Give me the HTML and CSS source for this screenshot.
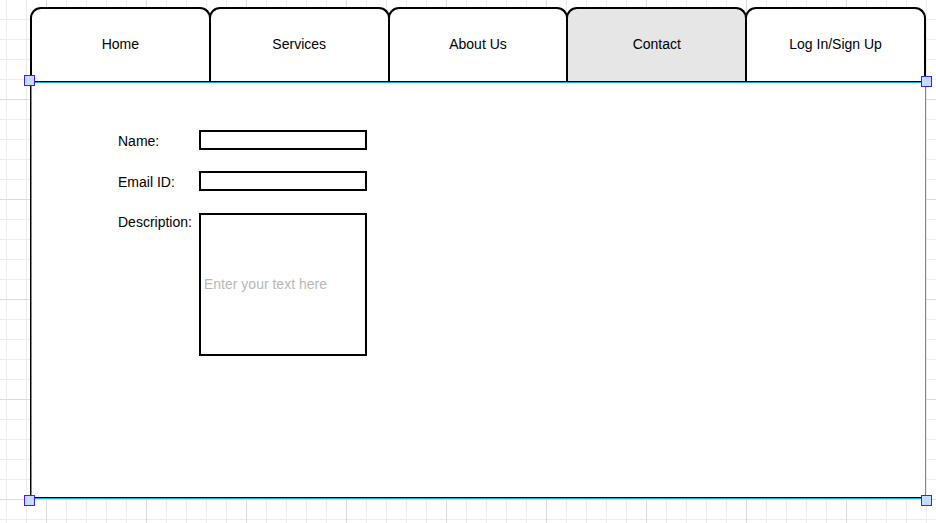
FILE: index.html
```html
<!DOCTYPE html>
<html lang="en">
<head>
<meta charset="utf-8">
<title>Contact wireframe</title>
<link rel="stylesheet" href="styles.css">
</head>
<body>
<div class="canvas">
  <nav class="tabs">
    <div class="tab">Home</div>
    <div class="tab">Services</div>
    <div class="tab">About Us</div>
    <div class="tab tab-active">Contact</div>
    <div class="tab">Log In/Sign Up</div>
  </nav>
  <section class="panel">
    <div class="selection"></div>
    <span class="handle h-tl"></span>
    <span class="handle h-tr"></span>
    <span class="handle h-bl"></span>
    <span class="handle h-br"></span>
    <form class="form">
      <div class="row row-name">
        <label class="label">Name:</label>
        <div class="field"></div>
      </div>
      <div class="row row-email">
        <label class="label">Email ID:</label>
        <div class="field"></div>
      </div>
      <div class="row row-desc">
        <label class="label label-top">Description:</label>
        <div class="field area"><span class="placeholder">Enter your text here</span></div>
      </div>
    </form>
  </section>
</div>
</body>
</html>
```

FILE: styles.css
```css
html, body {
  margin: 0;
  padding: 0;
}
body {
  width: 936px;
  height: 523px;
  overflow: hidden;
  font-family: "Liberation Sans", Arial, sans-serif;
  font-size: 14px;
  color: #000;
  background-color: #fff;
  background-image:
    linear-gradient(to right, #dcdcdc 1px, transparent 1px),
    linear-gradient(to bottom, #dcdcdc 1px, transparent 1px),
    linear-gradient(to right, #ececec 1px, transparent 1px),
    linear-gradient(to bottom, #ececec 1px, transparent 1px);
  background-size: 100px 100px, 100px 100px, 20px 20px, 20px 20px;
  background-position: 46px 0, 0 99px, 6px 0, 0 19px;
}
.canvas {
  padding: 7px 0 0 30px;
  width: 896px;
}
.tabs {
  display: flex;
  height: 74px;
}
.tab {
  flex: 1 1 0;
  display: flex;
  align-items: center;
  justify-content: center;
  background: #fff;
  border: 2px solid #000;
  border-bottom: none;
  border-radius: 11px 11px 0 0;
  margin-left: -2px;
  padding-bottom: 3px;
}
.tab:first-child {
  margin-left: 0;
}
.tab-active {
  background: #e6e6e6;
}
.panel {
  position: relative;
  height: 414px;
  border: 1px solid #000;
  border-top-width: 2px;
  background: #fff;
}
.selection {
  position: absolute;
  top: -1px;
  left: 0;
  right: -1px;
  bottom: -2px;
  border: 1px solid #1fa8df;
  pointer-events: none;
}
.handle {
  position: absolute;
  width: 9px;
  height: 9px;
  background: #c6dcff;
  border: 1px solid #3b1fff;
}
.h-tl { left: -7px; top: -8px; }
.h-tr { right: -7px; top: -7px; }
.h-bl { left: -7px; bottom: -9px; }
.h-br { right: -7px; bottom: -9px; }
.form {
  display: flex;
  flex-direction: column;
  padding: 47px 0 0 87px;
}
.row {
  display: flex;
  align-items: center;
}
.row-email { margin-top: 21px; }
.row-desc { margin-top: 22px; align-items: flex-start; }
.label {
  width: 81px;
  line-height: 20px;
  margin-top: 1px;
  margin-bottom: -1px;
}
.label-top {
  line-height: 18px;
  margin-top: 0;
  margin-bottom: 0;
}
.field {
  width: 164px;
  height: 16px;
  border: 2px solid #000;
  background: #fff;
}
.area {
  height: 139px;
  display: flex;
  align-items: center;
  padding-left: 3px;
  width: 161px;
}
.placeholder {
  color: #b8b8b8;
  white-space: nowrap;
  margin-top: -1px;
}
```
